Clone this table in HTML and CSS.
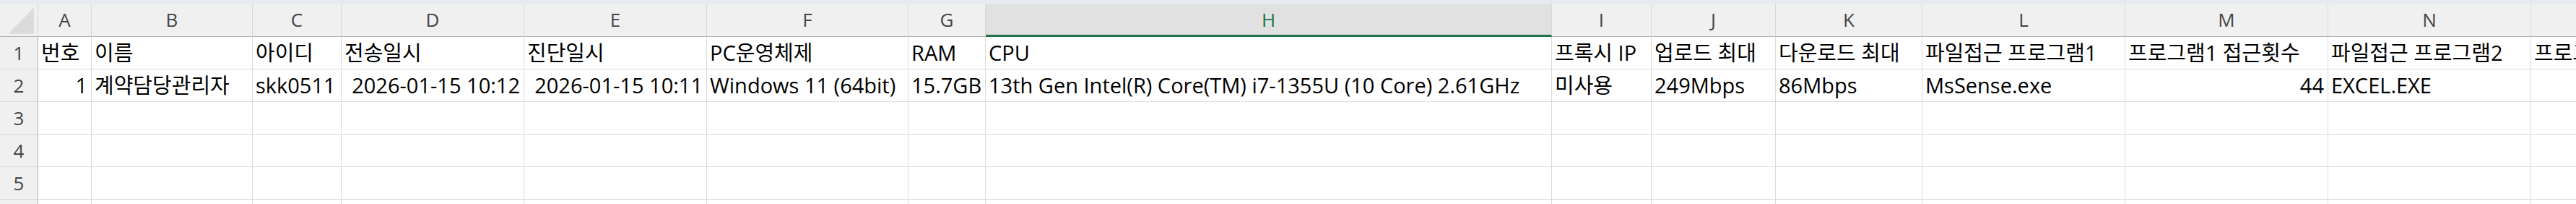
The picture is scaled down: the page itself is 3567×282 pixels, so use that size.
FILE: index.html
```html
<!DOCTYPE html>
<html lang="ko">
<head>
<meta charset="utf-8">
<title>Sheet</title>
<link rel="stylesheet" href="styles.css">
</head>
<body>
<div class="topstrip"></div>
<div class="sheet">
  <div class="row colhead">
    <div class="corner"><svg class="corner-tri" width="53" height="45" viewBox="0 0 53 45"><polygon points="12,41 48,41 48,4" fill="#dbdbdb"/></svg></div>
    <div class="ch">A</div><div class="ch">B</div><div class="ch">C</div><div class="ch">D</div>
    <div class="ch">E</div><div class="ch">F</div><div class="ch">G</div><div class="ch sel">H</div>
    <div class="ch">I</div><div class="ch">J</div><div class="ch">K</div><div class="ch">L</div>
    <div class="ch">M</div><div class="ch">N</div><div class="ch">O</div>
  </div>
  <div class="row">
    <div class="rh">1</div>
    <div class="c">번호</div><div class="c">이름</div><div class="c">아이디</div><div class="c">전송일시</div>
    <div class="c">진단일시</div><div class="c">PC운영체제</div><div class="c">RAM</div><div class="c">CPU</div>
    <div class="c">프록시 IP</div><div class="c">업로드 최대</div><div class="c">다운로드 최대</div><div class="c">파일접근 프로그램1</div>
    <div class="c">프로그램1 접근횟수</div><div class="c">파일접근 프로그램2</div><div class="c">프로그램2 접근횟수</div>
  </div>
  <div class="row">
    <div class="rh">2</div>
    <div class="c r">1</div><div class="c">계약담당관리자</div><div class="c">skk0511</div><div class="c r">2026-01-15 10:12</div>
    <div class="c r">2026-01-15 10:11</div><div class="c">Windows 11 (64bit)</div><div class="c">15.7GB</div><div class="c">13th Gen Intel(R) Core(TM) i7-1355U (10 Core) 2.61GHz</div>
    <div class="c">미사용</div><div class="c">249Mbps</div><div class="c">86Mbps</div><div class="c">MsSense.exe</div>
    <div class="c r">44</div><div class="c">EXCEL.EXE</div><div class="c"></div>
  </div>
  <div class="row">
    <div class="rh">3</div>
    <div class="c"></div><div class="c"></div><div class="c"></div><div class="c"></div><div class="c"></div><div class="c"></div><div class="c"></div><div class="c"></div><div class="c"></div><div class="c"></div><div class="c"></div><div class="c"></div><div class="c"></div><div class="c"></div><div class="c"></div>
  </div>
  <div class="row">
    <div class="rh">4</div>
    <div class="c"></div><div class="c"></div><div class="c"></div><div class="c"></div><div class="c"></div><div class="c"></div><div class="c"></div><div class="c"></div><div class="c"></div><div class="c"></div><div class="c"></div><div class="c"></div><div class="c"></div><div class="c"></div><div class="c"></div>
  </div>
  <div class="row">
    <div class="rh">5</div>
    <div class="c"></div><div class="c"></div><div class="c"></div><div class="c"></div><div class="c"></div><div class="c"></div><div class="c"></div><div class="c"></div><div class="c"></div><div class="c"></div><div class="c"></div><div class="c"></div><div class="c"></div><div class="c"></div><div class="c"></div>
  </div>
  <div class="row">
    <div class="rh"></div>
    <div class="c"></div><div class="c"></div><div class="c"></div><div class="c"></div><div class="c"></div><div class="c"></div><div class="c"></div><div class="c"></div><div class="c"></div><div class="c"></div><div class="c"></div><div class="c"></div><div class="c"></div><div class="c"></div><div class="c"></div>
  </div>
</div>
</body>
</html>
```

FILE: styles.css
```css
html, body {
  margin: 0;
  padding: 0;
  overflow: hidden;
  background: #ffffff;
}

.topstrip {
  height: 6px;
  background: #e7eaee;
}

.sheet {
  width: 3786px;
}

.row {
  display: grid;
  grid-template-columns: 53px 74px 223px 123px 253px 253px 279px 107px 784px 138px 172px 203px 281px 281px 281px 281px;
  height: 45px;
}

.row > div {
  box-sizing: border-box;
  overflow: hidden;
  white-space: nowrap;
}

/* column header row */
.corner {
  background: #f0f0f0;
  border-right: 1px solid #d6d6d6;
  border-bottom: 1px solid #b3b3b3;
  display: flex;
}

.corner-tri {
  display: block;
}

.ch {
  background: #f0f0f0;
  border-right: 1px solid #d9d9d9;
  border-bottom: 1px solid #b3b3b3;
  font-family: "Open Sans", "Noto Sans", sans-serif;
  font-size: 26px;
  color: #454545;
  display: flex;
  align-items: center;
  justify-content: center;
  line-height: 1;
  padding-bottom: 2px;
}

.ch.sel {
  background: #e1e1e1;
  color: #217346;
  border-bottom: 3px solid #217346;
  padding-bottom: 0;
}

/* row headers */
.rh {
  background: #f0f0f0;
  border-right: 1px solid #ababab;
  border-bottom: 1px solid #dadada;
  font-family: "Open Sans", "Noto Sans", sans-serif;
  font-size: 26px;
  color: #454545;
  display: flex;
  align-items: center;
  justify-content: center;
  line-height: 1;
}

/* cells */
.c {
  border-right: 1px solid #dadada;
  border-bottom: 1px solid #dadada;
  font-family: "Open Sans", "Noto Sans CJK KR", sans-serif;
  font-size: 29px;
  color: #000000;
  line-height: 36px;
  padding: 0 5px 4px 4px;
  display: flex;
  align-items: flex-end;
}

.c.r {
  justify-content: flex-end;
}
```
